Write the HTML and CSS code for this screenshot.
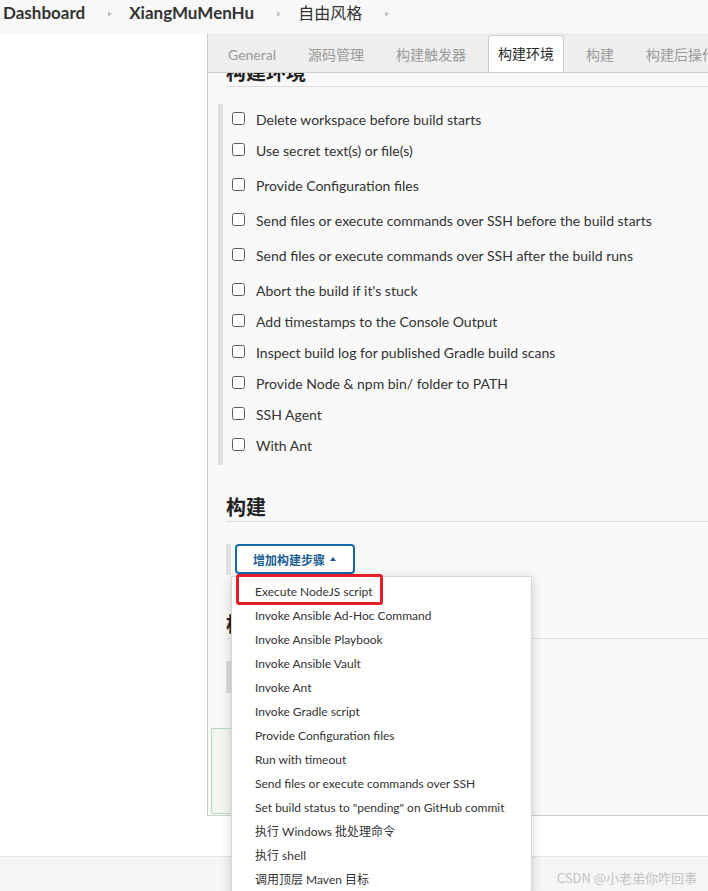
FILE: index.html
```html
<!DOCTYPE html>
<html lang="zh">
<head>
<meta charset="utf-8">
<title>自由风格 - Jenkins</title>
<link rel="stylesheet" href="styles.css">
</head>
<body>
<header class="crumbs">
  <span class="crumb strong">Dashboard</span><span class="sep"></span>
  <span class="crumb strong">XiangMuMenHu</span><span class="sep"></span>
  <span class="crumb cjk">自由风格</span><span class="sep"></span>
</header>
<div class="page">
  <aside class="side"></aside>
  <main class="panel">
    <nav class="tabs">
      <span class="tab">General</span>
      <span class="tab">源码管理</span>
      <span class="tab">构建触发器</span>
      <span class="tab active">构建环境</span>
      <span class="tab">构建</span>
      <span class="tab">构建后操作</span>
    </nav>
    <div class="view">
      <h2 class="sec-title env">构建环境</h2>
      <div class="opts">
        <label class="opt"><span class="cb"></span><span>Delete workspace before build starts</span></label>
        <label class="opt"><span class="cb"></span><span>Use secret text(s) or file(s)</span></label>
        <label class="opt gap"><span class="cb"></span><span>Provide Configuration files</span></label>
        <label class="opt gap"><span class="cb"></span><span>Send files or execute commands over SSH before the build starts</span></label>
        <label class="opt gap"><span class="cb"></span><span>Send files or execute commands over SSH after the build runs</span></label>
        <label class="opt gap"><span class="cb"></span><span>Abort the build if it's stuck</span></label>
        <label class="opt"><span class="cb"></span><span>Add timestamps to the Console Output</span></label>
        <label class="opt"><span class="cb"></span><span>Inspect build log for published Gradle build scans</span></label>
        <label class="opt"><span class="cb"></span><span>Provide Node &amp; npm bin/ folder to PATH</span></label>
        <label class="opt"><span class="cb"></span><span>SSH Agent</span></label>
        <label class="opt"><span class="cb"></span><span>With Ant</span></label>
      </div>
      <h2 class="sec-title build">构建</h2>
      <div class="step-row">
        <span class="bar"></span>
        <button class="add-btn">增加构建步骤<span class="caret"></span></button>
        <ul class="menu">
          <li>Execute NodeJS script</li>
          <li>Invoke Ansible Ad-Hoc Command</li>
          <li>Invoke Ansible Playbook</li>
          <li>Invoke Ansible Vault</li>
          <li>Invoke Ant</li>
          <li>Invoke Gradle script</li>
          <li>Provide Configuration files</li>
          <li>Run with timeout</li>
          <li>Send files or execute commands over SSH</li>
          <li>Set build status to "pending" on GitHub commit</li>
          <li>执行 Windows 批处理命令</li>
          <li>执行 shell</li>
          <li>调用顶层 Maven 目标</li>
        </ul>
        <span class="mark"></span>
      </div>
      <h2 class="sec-title post">构建后操作</h2>
      <div class="post-row"><span class="bar tall"></span></div>
      <div class="savebar"></div>
    </div>
  </main>
</div>
<footer class="foot"><span class="wm">CSDN @小老弟你咋回事</span></footer>
</body>
</html>
```
FILE: styles.css
```css
* { box-sizing: border-box; }
html, body { margin: 0; padding: 0; }
body {
  font-family: "Lato", "Noto Sans CJK SC", sans-serif;
  color: #333;
  background: #fff;
  width: 708px;
  height: 891px;
  overflow: hidden;
  position: relative;
}

.crumbs {
  height: 33px;
  background: #f8f8f8;
  display: flex;
  align-items: center;
  padding: 0 0 7px 3px;
  font-size: 17px;
  color: #333;
}
.crumb { line-height: 20px; }
.crumb.strong { font-weight: 700; }
.crumb.cjk { font-size: 16px; }
.sep {
  width: 0; height: 0;
  border-top: 3px solid transparent;
  border-bottom: 3px solid transparent;
  border-left: 4px solid #c4c4c4;
  margin: 1px 17px 0 23px;
}

.page { display: flex; }
.side { width: 207px; flex: none; background: #fff; }
.panel {
  flex: 1;
  background: #f9f9f9;
  border-left: 1px solid #cfcfcf;
  border-bottom: 1px solid #cfcfcf;
  display: flex;
  flex-direction: column;
}

.tabs {
  position: relative;
  z-index: 2;
  height: 40px;
  background: #eeeeee;
  border-bottom: 1px solid #cfcfcf;
  display: flex;
  align-items: flex-end;
  padding-left: 10px;
  white-space: nowrap;
  overflow: hidden;
}
.tab {
  flex: none;
  height: 37px;
  padding: 0 9px;
  margin-right: 12px;
  font-size: 14px;
  line-height: 37px;
  color: #9a9a9a;
  border: 1px solid transparent;
  border-bottom: none;
  border-radius: 4px 4px 0 0;
}
.tab.active {
  background: #fff;
  color: #2a2a2a;
  border-color: #cfcfcf;
  line-height: 36px;
}

.view {
  position: relative;
  padding: 0 0 0 10px;
}
.sec-title {
  margin: 0 0 0 8px;
  font-size: 20px;
  line-height: 24px;
  font-weight: 700;
  color: #222;
  padding-bottom: 2px;
  border-bottom: 1px solid #dcdcdc;
}
.sec-title.env { margin-top: -13px; }
.sec-title.build { margin-top: 30px; }
.sec-title.post { margin-top: 37px; }

.opts {
  margin-top: 17px;
  border-left: 5px solid #e1e1e1;
  padding: 0 0 4px 9px;
}
.opt {
  display: flex;
  align-items: center;
  height: 31px;
  font-size: 14px;
  color: #333;
}
.opt.gap { margin-top: 4px; }
.cb {
  width: 13px; height: 13px;
  border: 1.3px solid #5a5a5a;
  border-radius: 2.5px;
  background: #fff;
  margin-right: 11px;
  flex: none;
  position: relative;
  top: -1px;
}

.step-row {
  position: relative;
  display: flex;
  margin: 22px 0 0 8px;
}
.bar {
  width: 5px;
  height: 31px;
  background: #e1e1e1;
  margin-right: 4px;
}
.bar.tall { height: 32px; background: #dedede; }
.add-btn {
  width: 120px;
  height: 30px;
  border: 2px solid #1468a6;
  border-radius: 4px;
  background: #fff;
  color: #1b5d94;
  font-family: "Lato", "Noto Sans CJK SC", sans-serif;
  font-size: 12px;
  font-weight: 600;
  padding: 0 0 0 16px;
  display: flex;
  align-items: center;
  cursor: pointer;
}
.caret {
  width: 0; height: 0;
  border-left: 3.5px solid transparent;
  border-right: 3.5px solid transparent;
  border-bottom: 4px solid #1b5d94;
  margin-left: 5px;
}

.menu {
  position: absolute;
  z-index: 20;
  left: 5px;
  top: 32px;
  width: 301px;
  margin: 0;
  padding: 3px 0;
  list-style: none;
  background: #fff;
  border: 1px solid #d6d6d6;
  box-shadow: 0 2px 10px rgba(0, 0, 0, 0.18);
}
.menu li {
  height: 24px;
  line-height: 24px;
  padding-left: 23px;
  font-size: 12px;
  color: #333;
  white-space: nowrap;
}
.mark {
  position: absolute;
  z-index: 21;
  left: 10px;
  top: 30px;
  width: 147px;
  height: 31px;
  border: 3px solid #e41d28;
  border-radius: 3px;
}

.post-row { display: flex; margin: 22px 0 0 8px; }
.savebar {
  margin: 35px 0 1px -7px;
  width: 300px;
  height: 86px;
  background: #f4f5ef;
  border: 1px solid #b7d9c3;
  border-radius: 0 0 0 2px;
}

.foot {
  position: absolute;
  left: 0; right: 0; bottom: 0;
  height: 35px;
  background: #f5f5f5;
  border-top: 1px solid #e6e6e6;
  display: flex;
  justify-content: flex-end;
  align-items: center;
  padding: 6px 11px 0 0;
}
.wm {
  font-family: "Noto Sans CJK SC", sans-serif;
  font-size: 13px;
  color: #c3c3c3;
}
```
